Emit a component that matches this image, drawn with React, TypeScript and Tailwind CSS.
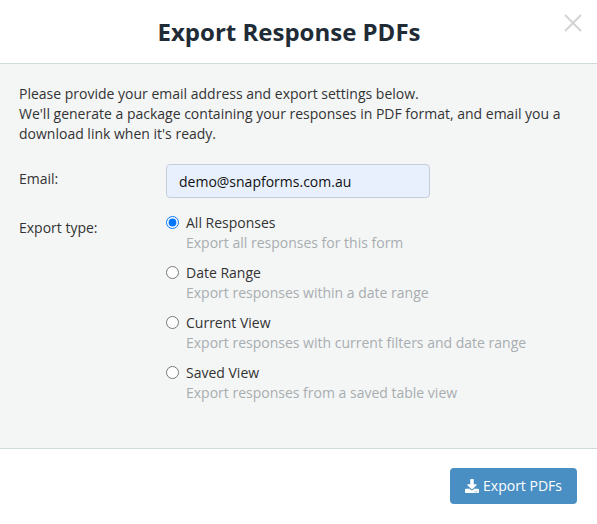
import React from 'react'
import { FaDownload } from 'react-icons/fa'

const exportTypes = [
  { id: 'all', label: 'All Responses', hint: 'Export all responses for this form' },
  { id: 'range', label: 'Date Range', hint: 'Export responses within a date range' },
  { id: 'current', label: 'Current View', hint: 'Export responses with current filters and date range' },
  { id: 'saved', label: 'Saved View', hint: 'Export responses from a saved table view' },
]

export default function App() {
  return (
    <div className="relative flex h-[524px] w-[597px] flex-col overflow-hidden bg-white font-['Open_Sans',sans-serif] text-[14px] leading-[20px] text-[#333]">
      {/* Header */}
      <div className="flex h-[64px] shrink-0 items-center justify-center border-b border-[#d0dad9] pr-[19px]">
        <h2 className="text-[24px] leading-[30px] font-bold text-[#212b36]">Export Response PDFs</h2>
      </div>
      <button className="absolute top-[14px] right-[15px] text-[#d4d4d4]">
        <svg width="18" height="18" viewBox="0 0 18 18" fill="none" stroke="currentColor" strokeWidth="2">
          <line x1="1" y1="1" x2="17" y2="17"></line>
          <line x1="17" y1="1" x2="1" y2="17"></line>
        </svg>
      </button>

      {/* Body */}
      <div className="h-[385px] shrink-0 border-b border-[#d0dad9] bg-[#f4f6f6] px-[19px] pt-[20px]">
        <p>
          Please provide your email address and export settings below.
          <br />
          We'll generate a package containing your responses in PDF format, and email you a download link when it's ready.
        </p>

        <div className="mt-[20px] flex">
          <label className="w-[147px] shrink-0 pt-[5px]">Email:</label>
          <input
            type="text"
            defaultValue="demo@snapforms.com.au"
            className="h-[34px] w-[264px] rounded-[4px] border border-[#c4cfdc] bg-[#e8f0fe] px-[12px] text-[14px] text-[#111] outline-none"
          />
        </div>

        <div className="mt-[15px] flex">
          <div className="w-[147px] shrink-0 pt-[5px]">Export type:</div>
          <div className="flex flex-col gap-[10px]">
            {exportTypes.map((item) => (
              <label key={item.id} className="flex">
                <input
                  type="radio"
                  name="exportType"
                  defaultChecked={item.id === 'all'}
                  className="mt-[3px] ml-0 h-[13px] w-[13px] shrink-0"
                />
                <span className="ml-[7px]">
                  <span className="block">{item.label}</span>
                  <span className="block text-[#a8adb0]">{item.hint}</span>
                </span>
              </label>
            ))}
          </div>
        </div>
      </div>

      {/* Footer */}
      <div className="flex flex-1 items-start justify-end pt-[19px] pr-[20px]">
        <button className="flex h-[36px] w-[127px] items-center justify-center gap-[4px] rounded-[4px] bg-[#4a8fc4] text-white">
          <FaDownload className="h-[14px] w-[14px]" />
          Export PDFs
        </button>
      </div>
    </div>
  )
}
